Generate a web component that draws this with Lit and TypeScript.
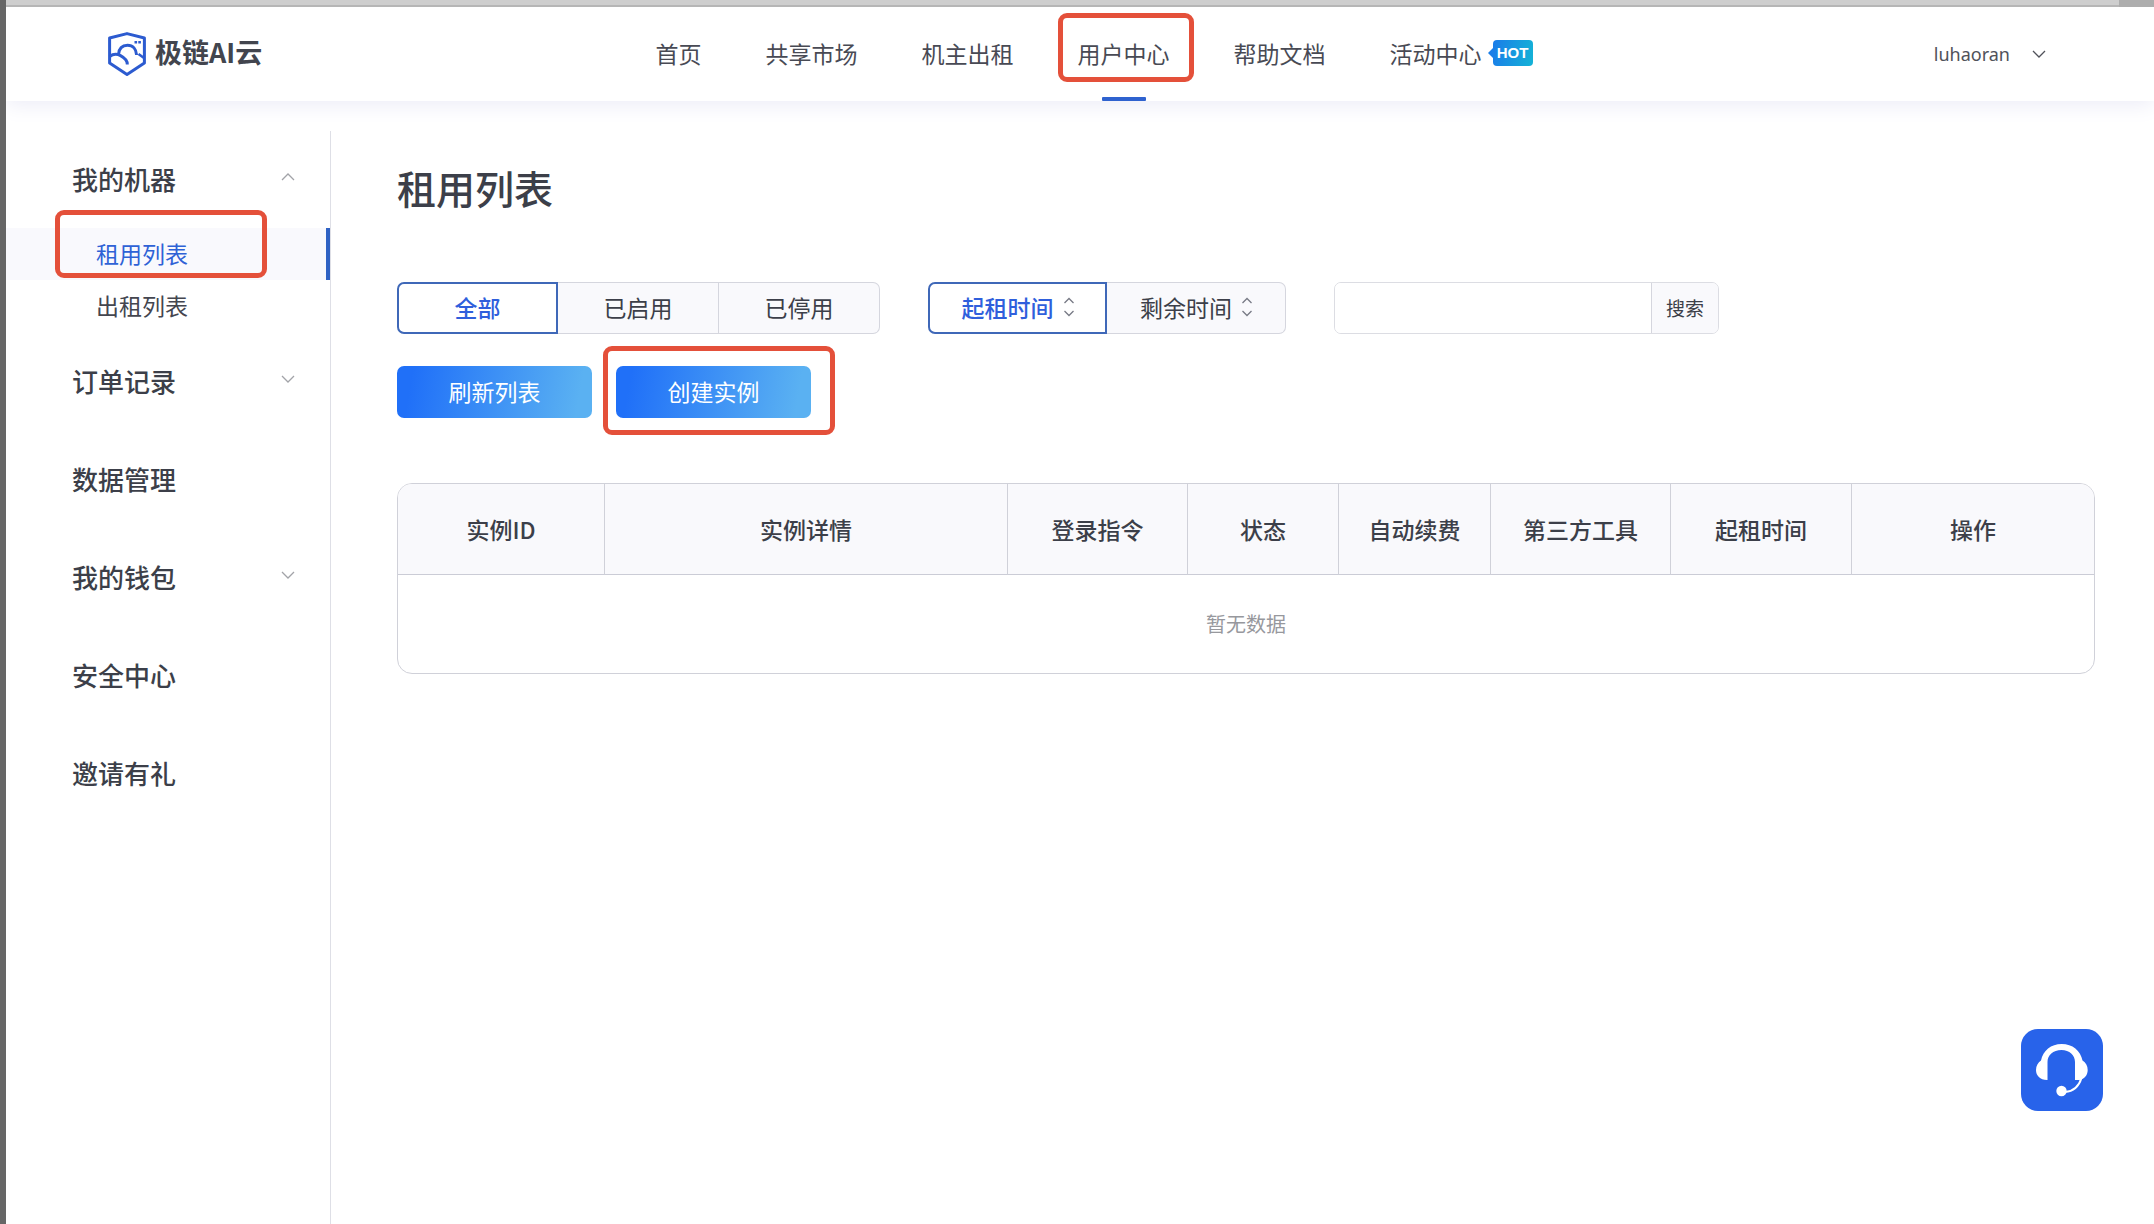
import { LitElement, html, css, svg, nothing } from "lit";
import { customElement, state } from "lit/decorators.js";
import { classMap } from "lit/directives/class-map.js";

interface NavItem {
  label: string;
  hot?: boolean;
}

interface MenuGroup {
  label: string;
  expandable?: boolean;
  children?: string[];
}

const NAV: NavItem[] = [
  { label: "首页" },
  { label: "共享市场" },
  { label: "机主出租" },
  { label: "用户中心" },
  { label: "帮助文档" },
  { label: "活动中心", hot: true },
];

const MENU: MenuGroup[] = [
  { label: "我的机器", expandable: true, children: ["租用列表", "出租列表"] },
  { label: "订单记录", expandable: true },
  { label: "数据管理" },
  { label: "我的钱包", expandable: true },
  { label: "安全中心" },
  { label: "邀请有礼" },
];

const COLUMNS: [string, number][] = [
  ["实例ID", 207],
  ["实例详情", 403],
  ["登录指令", 180],
  ["状态", 151],
  ["自动续费", 152],
  ["第三方工具", 180],
  ["起租时间", 181],
  ["操作", 242],
];

const chevron = (up: boolean) => html`
  <svg class="chevron" viewBox="0 0 14 8" width="14" height="8" aria-hidden="true">
    ${up
      ? svg`<path d="M1 7 L7 1 L13 7" fill="none" stroke="currentColor" stroke-width="1.3" />`
      : svg`<path d="M1 1 L7 7 L13 1" fill="none" stroke="currentColor" stroke-width="1.3" />`}
  </svg>
`;

const sortIcon = html`
  <svg class="sort" viewBox="0 0 10 20" width="10" height="20" aria-hidden="true">
    <path
      d="M0.5 6 L5 1.5 L9.5 6 M0.5 14 L5 18.5 L9.5 14"
      fill="none"
      stroke="#777a85"
      stroke-width="1.3"
    />
  </svg>
`;

@customElement("app-header")
export class AppHeader extends LitElement {
  @state() private current = "用户中心";

  static styles = css`
    :host {
      display: block;
      position: relative;
      z-index: 1;
      background: #fff;
      box-shadow: 0 4px 20px #ececf7;
      clip-path: inset(0 0 -30px 0);
    }
    .bar {
      display: flex;
      justify-content: space-between;
      align-items: center;
      height: 94px;
      padding: 0 108px 0 102px;
    }
    a {
      color: inherit;
      text-decoration: none;
    }
    .brand {
      display: flex;
      align-items: center;
      gap: 9px;
      font-size: 27px;
      font-weight: 700;
      line-height: 32px;
      color: #42454e;
    }
    .brand span {
      padding-bottom: 4px;
    }
    nav {
      display: flex;
      gap: 64px;
      height: 100%;
      font-size: 23px;
      color: #484a54;
    }
    .item {
      position: relative;
      display: flex;
      align-items: center;
      gap: 6px;
      padding-bottom: 3px;
    }
    .current::before {
      content: "";
      position: absolute;
      bottom: 0;
      left: 50%;
      width: 44px;
      height: 4px;
      margin-left: -22px;
      border-radius: 1px;
      background: #2f62cf;
    }
    .current::after {
      content: "";
      position: absolute;
      top: 6px;
      left: -20px;
      right: -24px;
      height: 59px;
      border: 5px solid #e4503a;
      border-radius: 9px;
    }
    .hot {
      display: flex;
      align-items: center;
    }
    .hot::before {
      content: "";
      border: 5px solid transparent;
      border-left-width: 0;
      border-right-color: #1a7fe8;
    }
    .hot span {
      width: 40px;
      border-radius: 4px;
      background: linear-gradient(100deg, #1a7ce9, #14b3d6);
      color: #fff;
      font: 700 15px/26px "Liberation Sans Narrow", "Liberation Sans", sans-serif;
      text-align: center;
    }
    .user {
      display: flex;
      align-items: center;
      gap: 22px;
      padding: 0 0 0 8px;
      border: 0;
      background: none;
      font: inherit;
      font-family: "Noto Sans", "Noto Sans CJK SC", sans-serif;
      font-size: 18px;
      color: #50525a;
    }
  `;

  render() {
    return html`
      <div class="bar">
        <a class="brand" href="#home">
          <svg viewBox="0 0 38 44" width="38" height="44" aria-hidden="true">
            <g fill="none" stroke="#2c5bd0" stroke-linejoin="round">
              <path d="M19 1.6 L36.4 6 V31 L19 42.4 L1.6 31 V6 Z" stroke-width="3" />
              <path d="M1.6 24.5 C5 22 9 21.8 12.5 23.6 C17 26 19.5 29 19.3 32.5" stroke-width="3" />
              <path d="M10.5 22.5 C11 16.5 14.5 13.3 19.5 13.3 C25 13.3 28.3 17 28.6 23" stroke-width="3" />
              <path d="M30.5 22 L36 26" stroke-width="2.6" />
              <path d="M26.5 10.3 h2.6 M30.3 10.3 h2.6" stroke-width="2.4" />
            </g>
          </svg>
          <span>极链AI云</span>
        </a>
        <nav>
          ${NAV.map(
            (n) => html`
              <a
                class=${classMap({ item: true, current: n.label === this.current })}
                href="#nav"
                @click=${() => (this.current = n.label)}
              >
                ${n.label}${n.hot ? html`<span class="hot"><span>HOT</span></span>` : nothing}
              </a>
            `
          )}
        </nav>
        <button class="user">luhaoran ${chevron(false)}</button>
      </div>
    `;
  }
}

@customElement("side-menu")
export class SideMenu extends LitElement {
  @state() private active = "租用列表";

  static styles = css`
    :host {
      display: block;
      margin-top: 30px;
      padding-top: 3px;
      border-right: 1px solid #dedfe6;
      color: #3c3f49;
    }
    ul {
      display: flex;
      flex-direction: column;
      gap: 4px;
      margin: 0;
      padding: 0;
      list-style: none;
    }
    .sub {
      gap: 0;
    }
    .group {
      display: flex;
      align-items: center;
      justify-content: space-between;
      box-sizing: border-box;
      width: 100%;
      height: 94px;
      padding: 0 35px 5px 66px;
      border: 0;
      background: none;
      color: inherit;
      font: inherit;
      font-size: 26px;
      font-weight: 500;
    }
    .chevron {
      color: #a2a3a8;
      margin-bottom: 3px;
    }
    .link {
      position: relative;
      display: flex;
      align-items: center;
      box-sizing: border-box;
      height: 52px;
      padding: 0 0 3px 90px;
      font-size: 23px;
      color: #44464f;
      text-decoration: none;
    }
    .active {
      background: #f9f9fd;
      border-right: 4px solid #2f62c4;
      color: #2f62d6;
    }
    .active::after {
      content: "";
      position: absolute;
      top: -18px;
      bottom: 2px;
      left: 49px;
      right: 59px;
      border: 5px solid #e4503a;
      border-radius: 9px;
    }
  `;

  render() {
    return html`
      <ul>
        ${MENU.map(
          (g) => html`
            <li>
              <button class="group">
                <span>${g.label}</span>
                ${g.expandable ? chevron(!!g.children) : nothing}
              </button>
              ${g.children
                ? html`<ul class="sub">
                    ${g.children.map(
                      (c) => html`<li>
                        <a
                          class=${classMap({ link: true, active: c === this.active })}
                          href="#list"
                          @click=${() => (this.active = c)}
                          >${c}</a
                        >
                      </li>`
                    )}
                  </ul>`
                : nothing}
            </li>
          `
        )}
      </ul>
    `;
  }
}

@customElement("rent-list")
export class RentList extends LitElement {
  @state() private status = "全部";
  @state() private sortBy = "起租时间";

  static styles = css`
    :host {
      display: block;
      padding: 57px 61px 60px 66px;
      color: #3c3f49;
      font-size: 23px;
    }
    h1 {
      margin: 0 0 66px;
      font-size: 39px;
      font-weight: 500;
      line-height: 58px;
    }
    button {
      font: inherit;
      color: inherit;
    }
    .filters {
      display: flex;
      flex-wrap: wrap;
      gap: 32px 48px;
    }
    .segments {
      display: flex;
    }
    .segment {
      display: flex;
      align-items: center;
      justify-content: center;
      gap: 10px;
      box-sizing: border-box;
      width: 161px;
      height: 52px;
      padding: 0 0 2px;
      border: 1px solid #d5d6de;
      border-left-width: 0;
      background: #f9f9fc;
    }
    .wide .segment {
      width: 179px;
    }
    .segment:first-child {
      border-left-width: 1px;
      border-radius: 7px 0 0 7px;
    }
    .segment:last-child {
      border-radius: 0 7px 7px 0;
    }
    .segment.on {
      border: 2px solid #3f68b8;
      background: #fff;
      color: #2f5fdc;
      font-weight: 500;
    }
    .search {
      display: flex;
      box-sizing: border-box;
      width: 385px;
      height: 52px;
      border: 1px solid #dcdde3;
      border-radius: 7px;
      overflow: hidden;
    }
    .search input {
      flex: 1;
      min-width: 0;
      padding: 0 16px;
      border: 0;
      outline: 0;
      font: inherit;
    }
    .search button {
      width: 67px;
      padding: 0 0 2px;
      border: 0;
      border-left: 1px solid #d5d6de;
      background: #f9f9fc;
      font-size: 19px;
    }
    .actions {
      display: flex;
      gap: 24px;
      margin: 32px 0 65px;
    }
    .action {
      position: relative;
      width: 195px;
      height: 52px;
      padding: 0 0 2px;
      border: 0;
      border-radius: 7px;
      background: linear-gradient(100deg, #2070f8 8%, #5ab1f2 92%);
      color: #fff;
    }
    .marked::after {
      content: "";
      position: absolute;
      top: -20px;
      bottom: -17px;
      left: -13px;
      right: -24px;
      border: 5px solid #e4503a;
      border-radius: 9px;
    }
    table {
      width: 100%;
      table-layout: fixed;
      border: 1px solid #d0d1d9;
      border-radius: 15px;
      border-spacing: 0;
      overflow: hidden;
    }
    th {
      height: 90px;
      padding: 0;
      border-bottom: 1px solid #cbccd6;
      border-right: 1px solid #d0d1d9;
      background: #f9f9fc;
      font-weight: 500;
    }
    th:last-child {
      border-right: 0;
    }
    td {
      height: 96px;
      padding: 0 0 2px;
      font-size: 20px;
      color: #97989d;
      text-align: center;
    }
  `;

  render() {
    return html`
      <h1>租用列表</h1>
      <div class="filters">
        <div class="segments">
          ${["全部", "已启用", "已停用"].map(
            (s) => html`<button
              class=${classMap({ segment: true, on: s === this.status })}
              @click=${() => (this.status = s)}
            >
              ${s}
            </button>`
          )}
        </div>
        <div class="segments wide">
          ${["起租时间", "剩余时间"].map(
            (s) => html`<button
              class=${classMap({ segment: true, on: s === this.sortBy })}
              @click=${() => (this.sortBy = s)}
            >
              <span>${s}</span>${sortIcon}
            </button>`
          )}
        </div>
        <form class="search" @submit=${(e: Event) => e.preventDefault()}>
          <input type="text" aria-label="搜索" />
          <button>搜索</button>
        </form>
      </div>
      <div class="actions">
        <button class="action">刷新列表</button>
        <button class="action marked">创建实例</button>
      </div>
      <table>
        <colgroup>
          ${COLUMNS.map(([, w]) => html`<col style="width:${w}px" />`)}
        </colgroup>
        <thead>
          <tr>
            ${COLUMNS.map(([name]) => html`<th scope="col">${name}</th>`)}
          </tr>
        </thead>
        <tbody>
          <tr>
            <td colspan=${COLUMNS.length}>暂无数据</td>
          </tr>
        </tbody>
      </table>
    `;
  }
}

@customElement("app-root")
export class AppRoot extends LitElement {
  static styles = css`
    :host {
      display: flex;
      flex-direction: column;
      box-sizing: border-box;
      min-height: 100vh;
      border-left: 6px solid #666;
      background: #fff;
      font-family: "Noto Sans CJK SC", sans-serif;
    }
    .edge {
      display: flex;
      justify-content: flex-end;
      box-sizing: border-box;
      height: 7px;
      border-bottom: 2px solid #b6b6b6;
      background: #cecece;
    }
    .corner {
      width: 35px;
      height: 7px;
      background: #adadad;
    }
    .body {
      display: grid;
      grid-template-columns: 325px minmax(0, 1fr);
      flex: 1;
    }
    .support {
      position: fixed;
      right: 51px;
      bottom: 113px;
      width: 82px;
      height: 82px;
      padding: 0;
      border: 0;
      border-radius: 17px;
      background: #2863ea;
    }
    .support svg {
      display: block;
    }
  `;

  render() {
    return html`
      <div class="edge"><div class="corner"></div></div>
      <app-header></app-header>
      <div class="body">
        <side-menu></side-menu>
        <rent-list></rent-list>
      </div>
      <button class="support" aria-label="客服">
        <svg viewBox="0 0 82 82" width="82" height="82" aria-hidden="true">
          <path
            fill="#fff"
            d="M26 51 C19 51 15 46.5 15 41 C15 37 17 33.5 20 31.5 C22 21.5 30 15 40.7 15 C51.5 15 59.5 21.5 61.5 31.5 C64.8 33.5 66.7 37 66.7 41 C66.7 46 63.5 50.2 58.5 51 H54 V33 C54 26 48.5 21 40.5 21 C32 21 26.5 26 26.5 33 V51 Z"
          />
          <path d="M60.5 49 C58 57 52 62.5 44 63" fill="none" stroke="#fff" stroke-width="2" />
          <circle cx="40.5" cy="62" r="5.2" fill="#fff" />
        </svg>
      </button>
    `;
  }
}
